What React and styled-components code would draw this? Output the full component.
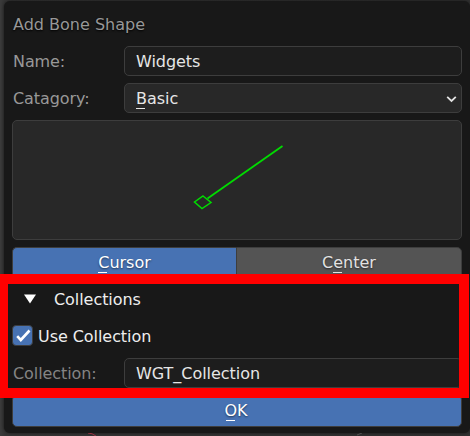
import React from "react";
import styled, { createGlobalStyle } from "styled-components";

const GlobalStyle = createGlobalStyle`
  * { box-sizing: border-box; }
  body { margin: 0; overflow: hidden; background: #393939; }
`;

const Viewport = styled.main`
  position: relative;
  width: 470px;
  height: 436px;
  padding: 1px 0 0 4px;
  overflow: hidden;
  background: linear-gradient(90deg, #3b3b3b, #353535 4px, #303030);
  font: 16px/32px "DejaVu Sans", sans-serif;
`;

const Dialog = styled.section`
  display: flex;
  flex-direction: column;
  gap: 7px;
  width: 466px;
  height: 432px;
  padding: 8px 8px 8px;
  border-radius: 6px;
  background: #181818;
  box-shadow: 0 0 3px #151515;
`;

const Title = styled.h1`
  height: 30px;
  margin: 0;
  padding-left: 1px;
  font-size: inherit;
  font-weight: normal;
  color: #989898;
  text-shadow: 0 1px 2px #000;
`;

const Row = styled.div`
  display: grid;
  grid-template-columns: 112px 338px;
  height: 30px;
`;

const Label = styled.label`
  padding-left: 1px;
  color: ${(p) => (p.$dim ? "#848484" : "#989898")};
  letter-spacing: -0.09px;
`;

const Field = styled.div`
  display: flex;
  align-items: flex-start;
  justify-content: space-between;
  height: 30px;
  padding: 0 4px 0 11px;
  border: 1px solid #3d3d3d;
  border-radius: 5px;
  background: ${(p) => (p.$menu ? "#282828" : "#1d1d1d")};
  color: #e6e6e6;
  line-height: 30px;
  letter-spacing: -0.04px;
  > svg { margin-top: 11px; }
`;

const Accelerator = styled.span`
  display: inline-block;
  height: 25px;
  vertical-align: top;
  background: linear-gradient(currentColor, currentColor) ${(p) => p.$shift || "0px"} 100% / 9px 1px no-repeat;
`;

const Preview = styled.div`
  height: 120px;
  border: 1px solid #3d3d3d;
  border-radius: 5px;
  background: #282828;
  svg { display: block; }
`;

const ButtonRow = styled.div`
  display: grid;
  grid-template-columns: ${(p) => (p.$split ? "224px 226px" : "450px")};
  height: 30px;
`;

const Button = styled.button`
  display: flex;
  justify-content: center;
  align-items: flex-start;
  padding: 0 ${(p) => p.$inset || "0px"} 0 0;
  border: 1px solid #3d3d3d;
  border-radius: ${(p) => p.$radius || "5px"};
  border-right-width: ${(p) => (p.$joined ? 0 : "1px")};
  background: ${(p) => (p.$active ? "#4772b3" : "#545454")};
  color: ${(p) => (p.$active ? "#fff" : "#e2e2e2")};
  font: inherit;
  line-height: 30px;
  text-shadow: 0 1px 2px #0008;
`;

const PanelHeader = styled.div`
  display: flex;
  align-items: flex-start;
  gap: 18px;
  height: 30px;
  padding-left: 12px;
  color: #eee;
  letter-spacing: -0.06px;
  svg { margin-top: 10px; }
`;

const CheckRow = styled.label`
  display: flex;
  align-items: flex-start;
  gap: 5px;
  height: 30px;
  color: #eee;
  letter-spacing: -0.06px;
`;

const CheckBox = styled.span`
  width: 21px;
  height: 21px;
  margin-top: 4px;
  border: 1px solid #3d3d3d;
  border-radius: 4px;
  background: #4772b3;
  svg { display: block; }
`;

const Highlight = styled.div`
  position: absolute;
  left: -2px;
  top: 274px;
  width: 471px;
  height: 124px;
  border: 10px solid #f00;
  pointer-events: none;
`;

export default function App() {
  return (
    <>
      <GlobalStyle />
      <Viewport>
        <Dialog>
          <Title>Add Bone Shape</Title>
          <Row>
            <Label>Name:</Label>
            <Field>Widgets</Field>
          </Row>
          <Row>
            <Label>Catagory:</Label>
            <Field $menu>
              <span><Accelerator>B</Accelerator>asic</span>
              <svg width="11" height="8" viewBox="0 0 11 8" fill="none">
                <path d="M1.2 1.9 5.5 6 9.8 1.9" stroke="#e2e2e2" strokeWidth="1.8" />
              </svg>
            </Field>
          </Row>
          <Preview>
            <svg width="448" height="118" fill="none" stroke="#00dc00">
              <path d="M194.5 77.5 269.5 25" strokeWidth="1.8" />
              <path d="M190 75 198 81.5 189 87.5 181.5 81Z" strokeWidth="1.5" />
            </svg>
          </Preview>
          <ButtonRow $split>
            <Button $active $joined $radius="5px 0 0 5px"><Accelerator>C</Accelerator>ursor</Button>
            <Button $radius="0 5px 5px 0">C<Accelerator>e</Accelerator>nter</Button>
          </ButtonRow>
          <PanelHeader>
            <svg width="12" height="10"><path d="M0 .5H12L6 9.5Z" fill="#fff" /></svg>
            Collections
          </PanelHeader>
          <CheckRow>
            <CheckBox>
              <svg width="19" height="19" fill="none">
                <path d="M4.2 10.2 7.8 14 16.5 4.5" stroke="#fff" strokeWidth="2.6" />
              </svg>
            </CheckBox>
            Use Collection
          </CheckRow>
          <Row>
            <Label $dim>Collection:</Label>
            <Field>WGT_Collection</Field>
          </Row>
          <ButtonRow>
            <Button $active $inset="2px"><Accelerator $shift="2px">O</Accelerator>K</Button>
          </ButtonRow>
        </Dialog>
        <Highlight />
        <svg width="470" height="3" style={{ display: "block" }}>
          <path d="M84 0Q88 0 92 3" stroke="#9b3040" fill="none" />
          <path d="M353 2 358 0" stroke="#505050" />
        </svg>
      </Viewport>
    </>
  );
}
